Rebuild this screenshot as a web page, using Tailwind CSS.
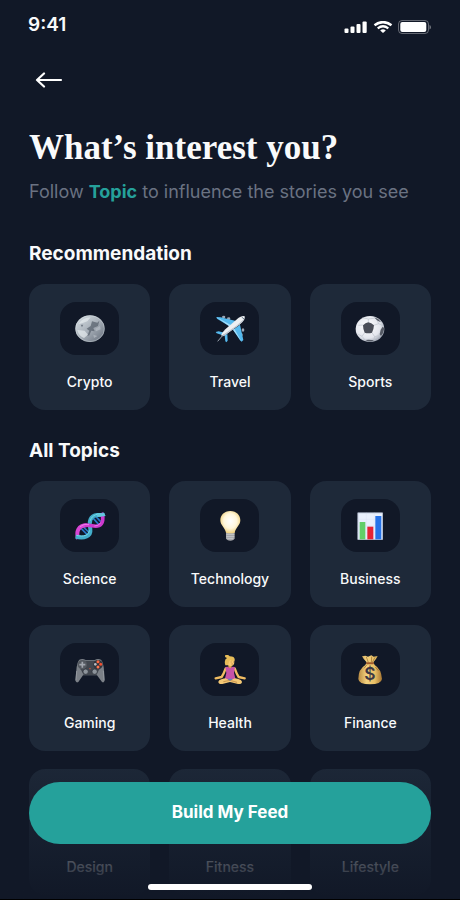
<!DOCTYPE html>
<html lang="en">
<head>
    <meta charset="UTF-8">
    <meta name="viewport" content="width=device-width, initial-scale=1.0">
    <title>Choose your topics</title>
    <!-- Tailwind CSS for styling -->
    <script src="https://cdn.jsdelivr.net/npm/@tailwindcss/browser@4"></script>
</head>
<body class="bg-[#111827] font-['Inter',sans-serif] text-gray-50">

<div class="relative flex h-screen flex-col overflow-hidden">

    <!-- Status bar -->
    <header class="flex h-[50px] shrink-0 items-center justify-between px-7">
        <span class="text-[19px] font-semibold">9:41</span>
        <div class="flex items-center gap-[5px] pt-1">
            <svg class="h-3 w-6" viewBox="0 0 24 12" fill="#fff">
                <rect x="0.5" y="7.5" width="4" height="4.5" rx="1"/>
                <rect x="6.5" y="5.5" width="4" height="6.5" rx="1"/>
                <rect x="12.5" y="3" width="4" height="9" rx="1"/>
                <rect x="18.5" y="0.5" width="4.2" height="11.5" rx="1"/>
            </svg>
            <svg class="h-3 w-5" viewBox="0 0 20 12">
                <path d="M1.5 4.2Q10-2 18.5 4.2" fill="none" stroke="#fff" stroke-width="2.5"/>
                <path d="M4.7 7.3Q10 3.3 15.3 7.3" fill="none" stroke="#fff" stroke-width="2.3"/>
                <path d="M7.2 9.4Q10 7.2 12.8 9.4L10 12Z" fill="#fff"/>
            </svg>
            <svg class="h-3.5 w-[34px]" viewBox="0 0 34 14">
                <rect x="0.5" y="0.5" width="30" height="13" rx="3.5" fill="none" stroke="#fff" stroke-opacity=".35"/>
                <rect x="2.3" y="2" width="26" height="10" rx="2" fill="#fff"/>
                <path d="M31.5 5V9.5Q33 9 33 7.2T31.5 5Z" fill="#fff" fill-opacity=".4"/>
            </svg>
        </div>
    </header>

    <main class="flex-1 overflow-y-auto px-[29px] [scrollbar-width:none]">
        <button type="button" aria-label="Back" class="mt-3.5 flex h-8 items-center pl-1.5">
            <svg class="h-4 w-7" viewBox="0 0 28 16" fill="none" stroke="#fff" stroke-width="2.2" stroke-linecap="round" stroke-linejoin="round">
                <path d="M26 8H2M9 1.5L2 8L9 14.5"/>
            </svg>
        </button>

        <h1 class="mt-8 font-['Liberation_Serif',serif] text-[35px] leading-10 font-bold">What’s interest you?</h1>
        <p class="mt-2.5 text-lg leading-7 whitespace-nowrap text-gray-500">Follow <span class="font-bold text-[#25a19b]">Topic</span> to influence the stories you see</p>

        <h2 class="mt-[34px] text-[19px] leading-7 font-bold">Recommendation</h2>
        <div class="mt-4 grid grid-cols-3 gap-x-[19px] gap-y-[18px]">
            <button type="button" class="flex h-[126px] flex-col items-center rounded-2xl bg-gray-800 pt-[18px]">
                <span class="flex h-[53px] w-[59px] items-center justify-center rounded-2xl bg-[#111827]">
                    <svg class="h-[30px] w-8" viewBox="0 0 96 90">
                        <defs>
                            <linearGradient id="coin" x1="0" y1="0" x2="1" y2="1">
                                <stop offset="0" stop-color="#d9e1e6"/>
                                <stop offset=".5" stop-color="#a8b0b9"/>
                                <stop offset="1" stop-color="#626b78"/>
                            </linearGradient>
                        </defs>
                        <ellipse cx="48" cy="44" rx="44" ry="40" fill="url(#coin)"/>
                        <path d="M14 30Q26 10 50 10L40 22L24 28ZM10 48L32 50L42 62L30 72Q14 66 10 48Z" fill="#e6ebee" opacity=".7"/>
                        <path d="M54 22L70 26L76 20L72 36L58 42L62 52L52 50L46 64L40 66L46 50L38 44L50 36ZM20 32L28 32L24 40Z" fill="#59636f" opacity=".75"/>
                        <path d="M64 44L78 36L80 46L66 52ZM58 62L70 66L60 72Z" fill="#b6bec6" opacity=".7"/>
                        <ellipse cx="48" cy="44" rx="43" ry="39" fill="none" stroke="#dce2e6" stroke-width="2" opacity=".6"/>
                    </svg>
                </span>
                <span class="mt-[17px] text-sm font-medium">Crypto</span>
            </button>
            <button type="button" class="flex h-[126px] flex-col items-center rounded-2xl bg-gray-800 pt-[18px]">
                <span class="flex h-[53px] w-[59px] items-center justify-center rounded-2xl bg-[#111827]">
                    <svg class="h-[30px] w-8" viewBox="0 0 96 90">
                        <g fill="#9ca5b3">
                            <ellipse cx="29" cy="9" rx="5" ry="4"/>
                            <ellipse cx="44" cy="14" rx="5" ry="4"/>
                            <ellipse cx="87" cy="48" rx="4" ry="5"/>
                            <ellipse cx="82" cy="62" rx="4" ry="5"/>
                        </g>
                        <path d="M7 9L20 10L66 21L46 37L9 14ZM78 32L88 78L83 83L78 79L57 47ZM5 54L14 52L34 57L26 64L8 58ZM32 64L40 60L41 80L37 85L34 82Z" fill="#55b9ee"/>
                        <path d="M7 9L46 37L50 33ZM57 47L83 83L61 44Z" fill="#a9def8"/>
                        <path d="M92 7Q86 3 74 11L34 46Q22 58 22 64Q24 69 34 63L78 31Q95 17 92 7Z" fill="#edf0f3"/>
                        <path d="M91 14Q87 23 76 31L34 63Q26 69 23 65L66 36Z" fill="#bcc3cd"/>
                        <path d="M28 62L11 82" stroke="#9aa3ae" stroke-width="3"/>
                        <path d="M83 9L90 15" stroke="#69798a" stroke-width="3"/>
                    </svg>
                </span>
                <span class="mt-[17px] text-sm font-medium">Travel</span>
            </button>
            <button type="button" class="flex h-[126px] flex-col items-center rounded-2xl bg-gray-800 pt-[18px]">
                <span class="flex h-[53px] w-[59px] items-center justify-center rounded-2xl bg-[#111827]">
                    <svg class="h-[30px] w-8" viewBox="0 0 96 90">
                        <defs>
                            <radialGradient id="ball" cx=".4" cy=".4" r=".65">
                                <stop offset="0" stop-color="#fff"/>
                                <stop offset=".7" stop-color="#e3e6ed"/>
                                <stop offset="1" stop-color="#9ca3b0"/>
                            </radialGradient>
                        </defs>
                        <ellipse cx="48" cy="45" rx="43" ry="39" fill="url(#ball)"/>
                        <path d="M43 26V15L25 11M43 15L66 12M59 34L74 29L86 35M74 29L66 12M54 56L62 68L78 64M32 56L24 67L33 78M27 33L13 34M62 68L59 79M24 67L11 60" fill="none" stroke="#bdc2cc" stroke-width="2"/>
                        <path d="M27 34Q34 26 43 25Q52 26 60 34Q59 47 54 56Q43 60 32 56Q27 46 27 34Z" fill="#4a4e58"/>
                        <path d="M86 38L91 43Q89 57 81 66L77 61L80 47ZM34 78Q47 76 60 79Q48 87 34 78ZM61 10Q74 13 81 24Q69 22 61 10Z" fill="#555a65"/>
                    </svg>
                </span>
                <span class="mt-[17px] text-sm font-medium">Sports</span>
            </button>
        </div>

        <h2 class="mt-[27px] text-[19px] leading-7 font-bold">All Topics</h2>
        <div class="mt-4 grid grid-cols-3 gap-x-[19px] gap-y-[18px]">
            <button type="button" class="flex h-[126px] flex-col items-center rounded-2xl bg-gray-800 pt-[18px]">
                <span class="flex h-[53px] w-[59px] items-center justify-center rounded-2xl bg-[#111827]">
                    <svg class="h-[30px] w-8" viewBox="0 0 96 90" fill="none">
                        <path d="M22 53L39 70M28 48L44 63M58 22L74 40M66 17L80 32" stroke="#2978c8" stroke-width="5"/>
                        <path d="M12 84C6 61 13 43 38 43" stroke="#d946d5" stroke-width="12"/>
                        <path d="M5 77C30 84 52 76 49 54C44 31 49 14 69 12C78 11 86 13 92 10" stroke="#43aecb" stroke-width="12"/>
                        <path d="M7 73C30 79 46 72 46 58M49 29C54 10 72 8 91 8" stroke="#75d9e7" stroke-width="3"/>
                        <path d="M32 43C50 40 61 50 75 44C87 38 90 21 82 6" stroke="#cc39ce" stroke-width="11"/>
                        <path d="M18 47Q29 37 45 41M61 45Q72 46 80 36" stroke="#f27be9" stroke-width="3"/>
                        <path d="M69 12C78 10 86 13 92 10" stroke="#62c8dc" stroke-width="10"/>
                    </svg>
                </span>
                <span class="mt-[17px] text-sm font-medium">Science</span>
            </button>
            <button type="button" class="flex h-[126px] flex-col items-center rounded-2xl bg-gray-800 pt-[18px]">
                <span class="flex h-[53px] w-[59px] items-center justify-center rounded-2xl bg-[#111827]">
                    <svg class="h-[30px] w-8" viewBox="0 0 96 90">
                        <defs>
                            <radialGradient id="glow" cx=".5" cy=".45" r=".55">
                                <stop offset="0" stop-color="#fff"/>
                                <stop offset=".6" stop-color="#fff6da"/>
                                <stop offset="1" stop-color="#efcf7c"/>
                            </radialGradient>
                        </defs>
                        <path d="M36 62H62V82Q60 89 49 89T36 82Z" fill="#a3a4a8"/>
                        <path d="M37 70H61M37 77H61M40 83H58" stroke="#d5d6d9" stroke-width="2"/>
                        <path d="M49 0C30 0 19 13 19 28C19 43 34 51 36 65Q49 69 62 65C64 51 79 43 79 28C79 13 68 0 49 0Z" fill="url(#glow)"/>
                    </svg>
                </span>
                <span class="mt-[17px] text-sm font-medium">Technology</span>
            </button>
            <button type="button" class="flex h-[126px] flex-col items-center rounded-2xl bg-gray-800 pt-[18px]">
                <span class="flex h-[53px] w-[59px] items-center justify-center rounded-2xl bg-[#111827]">
                    <svg class="h-[30px] w-8" viewBox="0 0 96 90">
                        <rect x="11" y="5" width="75" height="81" fill="#e9f0fd"/>
                        <path d="M11 25H86M11 45H86M11 65H86M37 5V86M61 5V86" stroke="#d4dff2"/>
                        <rect x="12" y="6" width="73" height="79" fill="none" stroke="#bac5d8" stroke-width="2"/>
                        <rect x="17" y="33" width="17" height="52" fill="#62ce68"/>
                        <rect x="40" y="47" width="18" height="38" fill="#e52335"/>
                        <rect x="64" y="15" width="18" height="70" fill="#2673e8"/>
                    </svg>
                </span>
                <span class="mt-[17px] text-sm font-medium">Business</span>
            </button>
            <button type="button" class="flex h-[126px] flex-col items-center rounded-2xl bg-gray-800 pt-[18px]">
                <span class="flex h-[53px] w-[59px] items-center justify-center rounded-2xl bg-[#111827]">
                    <svg class="h-[30px] w-8" viewBox="0 0 96 90">
                        <path d="M16 14Q26 10 35 15H62Q71 10 81 14Q88 20 90 46L92 76Q90 85 84 81L69 61H27L13 81Q6 85 4 76L7 46Q9 20 16 14Z" fill="#7b8087"/>
                        <path d="M31 17H65L76 43L67 60H29L20 43Z" fill="#42474f"/>
                        <path d="M8 48L6 76M88 48L90 76" stroke="#a0a4aa" stroke-width="2"/>
                        <circle cx="25" cy="29" r="14" fill="#545960"/>
                        <circle cx="72" cy="29" r="14" fill="#30353e"/>
                        <path d="M25 20V38M16 29H34" stroke="#a1a6ad" stroke-width="5"/>
                        <circle cx="72" cy="20" r="4.5" fill="#ff673f"/>
                        <circle cx="80" cy="28" r="4.5" fill="#f15032"/>
                        <circle cx="72" cy="36" r="4.5" fill="#ff7650"/>
                        <circle cx="64" cy="28" r="4" fill="#b8bbc0"/>
                        <circle cx="35" cy="50" r="8" fill="#8c939a" stroke="#292e36" stroke-width="2"/>
                        <circle cx="62" cy="50" r="8" fill="#8c939a" stroke="#292e36" stroke-width="2"/>
                        <circle cx="48" cy="41" r="2" fill="#e3573b"/>
                    </svg>
                </span>
                <span class="mt-[17px] text-sm font-medium">Gaming</span>
            </button>
            <button type="button" class="flex h-[126px] flex-col items-center rounded-2xl bg-gray-800 pt-[18px]">
                <span class="flex h-[53px] w-[59px] items-center justify-center rounded-2xl bg-[#111827]">
                    <svg class="h-[30px] w-8" viewBox="0 0 96 90">
                        <path d="M35 40Q29 57 23 66L5 70M62 40Q68 57 74 66L92 70" fill="none" stroke="#f1bd62" stroke-width="7" stroke-linecap="round" stroke-linejoin="round"/>
                        <path d="M43 28H53V40H43Z" fill="#dfa24d"/>
                        <path d="M34 36Q39 35 42 35Q48 43 55 35Q60 35 63 36L60 54L65 74H32L37 54Z" fill="#c753a8"/>
                        <path d="M34 70Q17 72 13 80Q13 88 25 87L48 81L72 87Q84 88 84 80Q80 72 63 70L48 76Z" fill="#f4c875"/>
                        <path d="M28 80L48 76L69 82" fill="none" stroke="#b77a39" stroke-width="2"/>
                        <path d="M40 71H57L48 77Z" fill="#597fc3"/>
                        <ellipse cx="50" cy="20" rx="11" ry="13" fill="#f9ca71"/>
                        <path d="M34 31Q29 14 39 9Q29 5 35 0Q43-2 47 4Q64 4 62 17Q52 19 48 14Q44 21 42 31Z" fill="#e7bd59"/>
                        <path d="M50 21H53M57 21H60M52 27H57" stroke="#965b31" stroke-width="1.5"/>
                    </svg>
                </span>
                <span class="mt-[17px] text-sm font-medium">Health</span>
            </button>
            <button type="button" class="flex h-[126px] flex-col items-center rounded-2xl bg-gray-800 pt-[18px]">
                <span class="flex h-[53px] w-[59px] items-center justify-center rounded-2xl bg-[#111827]">
                    <svg class="h-[30px] w-8" viewBox="0 0 96 90">
                        <defs>
                            <linearGradient id="sack" x1="0" x2="1">
                                <stop offset="0" stop-color="#b98b43"/>
                                <stop offset=".35" stop-color="#f4d27e"/>
                                <stop offset=".7" stop-color="#e8bf65"/>
                                <stop offset="1" stop-color="#a67532"/>
                            </linearGradient>
                        </defs>
                        <path d="M24 4L34 2L42 5L52 1L59 5L71 3Q66 14 58 22L62 30Q82 42 84 72Q82 88 48 88T13 72Q13 42 34 30L38 22Q29 14 24 4Z" fill="url(#sack)"/>
                        <path d="M37 6L43 22M53 5L52 22M63 7L55 22M30 40L39 29M64 36L73 47" stroke="#966729" stroke-width="2"/>
                        <rect x="36" y="22" width="24" height="6" rx="3" fill="#a05b2c"/>
                        <text x="48" y="76" text-anchor="middle" font-family="Inter, sans-serif" font-size="52" font-weight="600" fill="#3d3844">$</text>
                    </svg>
                </span>
                <span class="mt-[17px] text-sm font-medium">Finance</span>
            </button>
            <button type="button" class="flex h-[126px] flex-col items-center rounded-2xl bg-gray-800 pt-[18px]">
                <span class="h-[53px] w-[59px] rounded-2xl bg-[#111827]"></span>
                <span class="mt-[17px] text-sm font-medium">Design</span>
            </button>
            <button type="button" class="flex h-[126px] flex-col items-center rounded-2xl bg-gray-800 pt-[18px]">
                <span class="h-[53px] w-[59px] rounded-2xl bg-[#111827]"></span>
                <span class="mt-[17px] text-sm font-medium">Fitness</span>
            </button>
            <button type="button" class="flex h-[126px] flex-col items-center rounded-2xl bg-gray-800 pt-[18px]">
                <span class="h-[53px] w-[59px] rounded-2xl bg-[#111827]"></span>
                <span class="mt-[17px] text-sm font-medium">Lifestyle</span>
            </button>
        </div>
    </main>

    <!-- Bottom action, fading out the list behind it -->
    <footer class="absolute inset-x-0 bottom-0 flex flex-col items-center border-b border-black bg-linear-to-b from-[#111827]/0 to-[#111827] px-[29px] pt-8 pb-[9px]">
        <button type="button" class="h-[62px] w-full rounded-full bg-[#25a19b] text-[17px] font-bold text-white">Build My Feed</button>
        <div class="mt-10 h-1.5 w-[164px] rounded-full bg-white"></div>
    </footer>
</div>

</body>
</html>
